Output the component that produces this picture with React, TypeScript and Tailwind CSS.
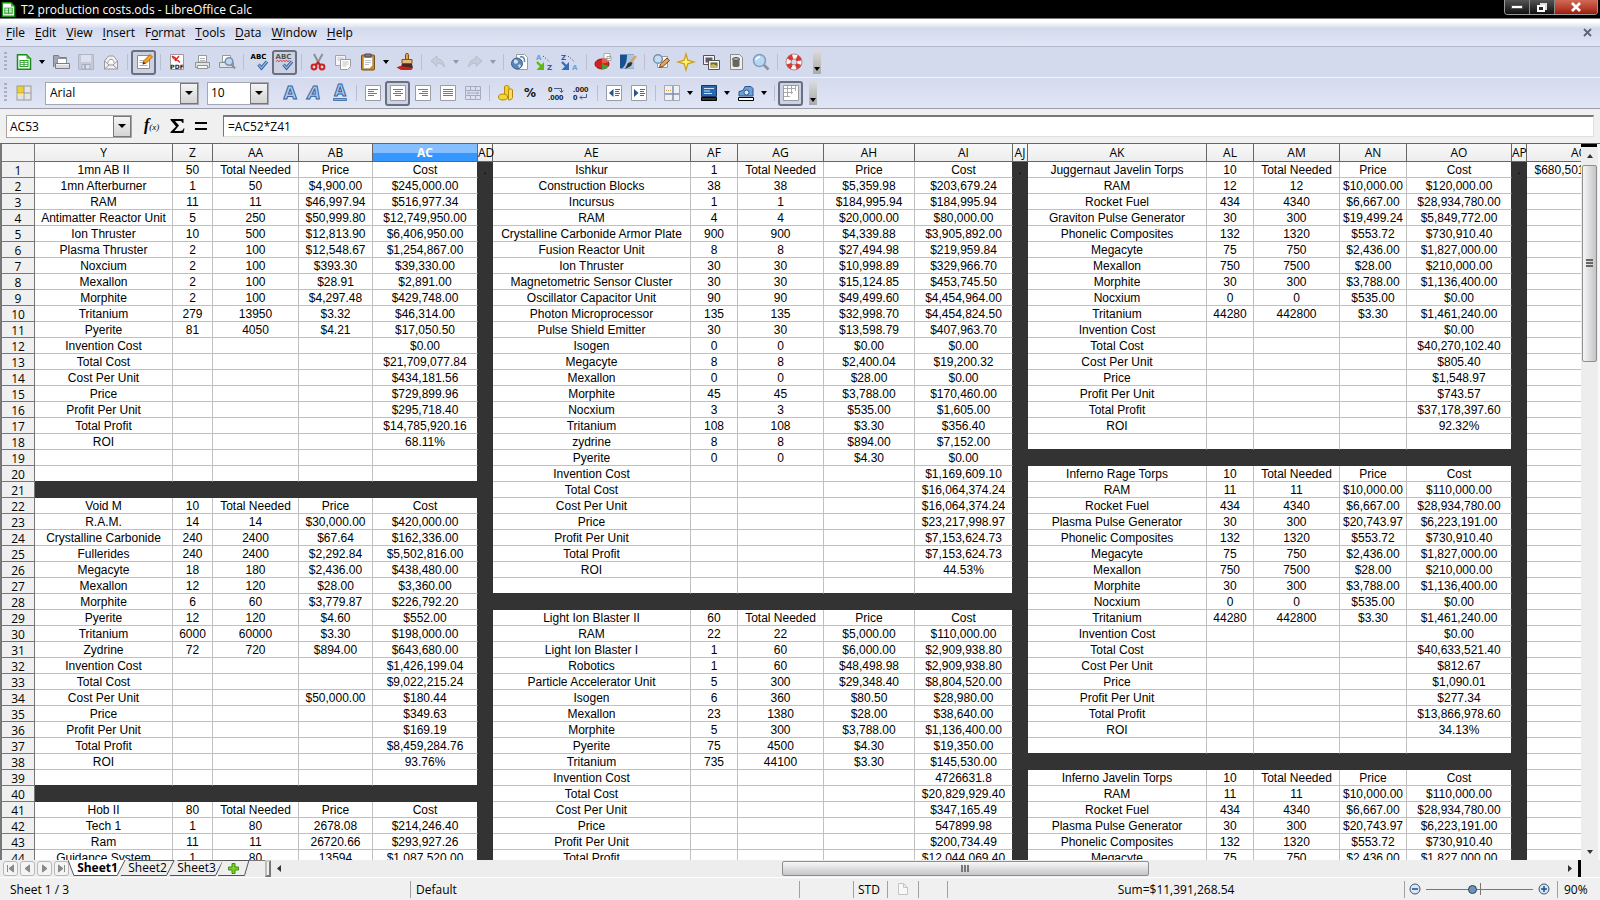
import { useState } from 'react'
import type { ReactNode } from 'react'

type Block = { col: number; row: number; lines: string }

const COLUMNS: [string, number][] = [
  ['Y', 138],
  ['Z', 40],
  ['AA', 86],
  ['AB', 74],
  ['AC', 105],
  ['AD', 15],
  ['AE', 198],
  ['AF', 47],
  ['AG', 86],
  ['AH', 91],
  ['AI', 98],
  ['AJ', 15],
  ['AK', 179],
  ['AL', 47],
  ['AM', 86],
  ['AN', 67],
  ['AO', 105],
  ['AP', 15],
  ['AQ', 106],
]

const ROWS = Array.from({ length: 44 }, (_, i) => i + 1)

// one line per spreadsheet row, cells split by "|"
const BLOCKS: Block[] = [
  {
    col: 0,
    row: 1,
    lines: `1mn AB II|50|Total Needed|Price|Cost
1mn Afterburner|1|50|$4,900.00|$245,000.00
RAM|11|11|$46,997.94|$516,977.34
Antimatter Reactor Unit|5|250|$50,999.80|$12,749,950.00
Ion Thruster|10|500|$12,813.90|$6,406,950.00
Plasma Thruster|2|100|$12,548.67|$1,254,867.00
Noxcium|2|100|$393.30|$39,330.00
Mexallon|2|100|$28.91|$2,891.00
Morphite|2|100|$4,297.48|$429,748.00
Tritanium|279|13950|$3.32|$46,314.00
Pyerite|81|4050|$4.21|$17,050.50
Invention Cost||||$0.00
Total Cost||||$21,709,077.84
Cost Per Unit||||$434,181.56
Price||||$729,899.96
Profit Per Unit||||$295,718.40
Total Profit||||$14,785,920.16
ROI||||68.11%`,
  },
  {
    col: 0,
    row: 22,
    lines: `Void M|10|Total Needed|Price|Cost
R.A.M.|14|14|$30,000.00|$420,000.00
Crystalline Carbonide|240|2400|$67.64|$162,336.00
Fullerides|240|2400|$2,292.84|$5,502,816.00
Megacyte|18|180|$2,436.00|$438,480.00
Mexallon|12|120|$28.00|$3,360.00
Morphite|6|60|$3,779.87|$226,792.20
Pyerite|12|120|$4.60|$552.00
Tritanium|6000|60000|$3.30|$198,000.00
Zydrine|72|720|$894.00|$643,680.00
Invention Cost||||$1,426,199.04
Total Cost||||$9,022,215.24
Cost Per Unit|||$50,000.00|$180.44
Price||||$349.63
Profit Per Unit||||$169.19
Total Profit||||$8,459,284.76
ROI||||93.76%`,
  },
  {
    col: 0,
    row: 41,
    lines: `Hob II|80|Total Needed|Price|Cost
Tech 1|1|80|2678.08|$214,246.40
Ram|11|11|26720.66|$293,927.26
Guidance System|1|80|13594|$1,087,520.00`,
  },
  { col: 5, row: 1, lines: '.' },
  {
    col: 6,
    row: 1,
    lines: `Ishkur|1|Total Needed|Price|Cost
Construction Blocks|38|38|$5,359.98|$203,679.24
Incursus|1|1|$184,995.94|$184,995.94
RAM|4|4|$20,000.00|$80,000.00
Crystalline Carbonide Armor Plate|900|900|$4,339.88|$3,905,892.00
Fusion Reactor Unit|8|8|$27,494.98|$219,959.84
Ion Thruster|30|30|$10,998.89|$329,966.70
Magnetometric Sensor Cluster|30|30|$15,124.85|$453,745.50
Oscillator Capacitor Unit|90|90|$49,499.60|$4,454,964.00
Photon Microprocessor|135|135|$32,998.70|$4,454,824.50
Pulse Shield Emitter|30|30|$13,598.79|$407,963.70
Isogen|0|0|$0.00|$0.00
Megacyte|8|8|$2,400.04|$19,200.32
Mexallon|0|0|$28.00|$0.00
Morphite|45|45|$3,788.00|$170,460.00
Nocxium|3|3|$535.00|$1,605.00
Tritanium|108|108|$3.30|$356.40
zydrine|8|8|$894.00|$7,152.00
Pyerite|0|0|$4.30|$0.00
Invention Cost||||$1,169,609.10
Total Cost||||$16,064,374.24
Cost Per Unit||||$16,064,374.24
Price||||$23,217,998.97
Profit Per Unit||||$7,153,624.73
Total Profit||||$7,153,624.73
ROI||||44.53%`,
  },
  {
    col: 6,
    row: 29,
    lines: `Light Ion Blaster II|60|Total Needed|Price|Cost
RAM|22|22|$5,000.00|$110,000.00
Light Ion Blaster I|1|60|$6,000.00|$2,909,938.80
Robotics|1|60|$48,498.98|$2,909,938.80
Particle Accelerator Unit|5|300|$29,348.40|$8,804,520.00
Isogen|6|360|$80.50|$28,980.00
Mexallon|23|1380|$28.00|$38,640.00
Morphite|5|300|$3,788.00|$1,136,400.00
Pyerite|75|4500|$4.30|$19,350.00
Tritanium|735|44100|$3.30|$145,530.00
Invention Cost||||4726631.8
Total Cost||||$20,829,929.40
Cost Per Unit||||$347,165.49
Price||||547899.98
Profit Per Unit||||$200,734.49
Total Profit||||$12,044,069.40`,
  },
  { col: 11, row: 1, lines: '.' },
  {
    col: 12,
    row: 1,
    lines: `Juggernaut Javelin Torps|10|Total Needed|Price|Cost
RAM|12|12|$10,000.00|$120,000.00
Rocket Fuel|434|4340|$6,667.00|$28,934,780.00
Graviton Pulse Generator|30|300|$19,499.24|$5,849,772.00
Phonelic Composites|132|1320|$553.72|$730,910.40
Megacyte|75|750|$2,436.00|$1,827,000.00
Mexallon|750|7500|$28.00|$210,000.00
Morphite|30|300|$3,788.00|$1,136,400.00
Nocxium|0|0|$535.00|$0.00
Tritanium|44280|442800|$3.30|$1,461,240.00
Invention Cost||||$0.00
Total Cost||||$40,270,102.40
Cost Per Unit||||$805.40
Price||||$1,548.97
Profit Per Unit||||$743.57
Total Profit||||$37,178,397.60
ROI||||92.32%`,
  },
  {
    col: 12,
    row: 20,
    lines: `Inferno Rage Torps|10|Total Needed|Price|Cost
RAM|11|11|$10,000.00|$110,000.00
Rocket Fuel|434|4340|$6,667.00|$28,934,780.00
Plasma Pulse Generator|30|300|$20,743.97|$6,223,191.00
Phonelic Composites|132|1320|$553.72|$730,910.40
Megacyte|75|750|$2,436.00|$1,827,000.00
Mexallon|750|7500|$28.00|$210,000.00
Morphite|30|300|$3,788.00|$1,136,400.00
Nocxium|0|0|$535.00|$0.00
Tritanium|44280|442800|$3.30|$1,461,240.00
Invention Cost||||$0.00
Total Cost||||$40,633,521.40
Cost Per Unit||||$812.67
Price||||$1,090.01
Profit Per Unit||||$277.34
Total Profit||||$13,866,978.60
ROI||||34.13%`,
  },
  {
    col: 12,
    row: 39,
    lines: `Inferno Javelin Torps|10|Total Needed|Price|Cost
RAM|11|11|$10,000.00|$110,000.00
Rocket Fuel|434|4340|$6,667.00|$28,934,780.00
Plasma Pulse Generator|30|300|$20,743.97|$6,223,191.00
Phonelic Composites|132|1320|$553.72|$730,910.40
Megacyte|75|750|$2,436.00|$1,827,000.00`,
  },
  { col: 17, row: 1, lines: '.' },
  { col: 18, row: 1, lines: '$680,501,394.04' },
]

const CELLS: Record<string, string> = {}
BLOCKS.forEach((b) => {
  b.lines.split('\n').forEach((line, r) => {
    line.split('|').forEach((text, c) => {
      CELLS[`${b.row + r}:${b.col + c}`] = text
    })
  })
})

const isDark = (row: number, col: number) => {
  if (col === 5 || col === 11 || col === 17) return true
  if (col < 5) return row === 21 || row === 40
  if (col > 5 && col < 11) return row === 28
  if (col > 11 && col < 17) return row === 19 || row === 38
  return false
}

const cellClass = (row: number, col: number) => {
  if (isDark(row, col)) return 'border-[#333333] bg-[#333333]'
  const bottom = isDark(row + 1, col) ? 'border-b-[#333333]' : 'border-b-[#c0c0c0]'
  const right = isDark(row, col + 1) ? 'border-r-[#333333]' : 'border-r-[#c0c0c0]'
  return `bg-white ${bottom} ${right}`
}

const Svg = ({ children, size = 20 }: { children: ReactNode; size?: number }) => (
  <svg width={size} height={size} viewBox={`0 0 ${size} ${size}`} fill="none" aria-hidden="true">
    {children}
  </svg>
)

const Tool = ({ label, active, children }: { label: string; active?: boolean; children: ReactNode }) => (
  <button
    aria-label={label}
    className={`flex size-[25px] shrink-0 items-center justify-center rounded-[3px] ${
      active ? 'border-2 border-[#6a7082] bg-[#ccd2e2]' : ''
    }`}
  >
    {children}
  </button>
)

const Arrow = ({ label, dim }: { label: string; dim?: boolean }) => (
  <button aria-label={label} className="flex h-6 w-3 shrink-0 items-center justify-center">
    <svg width="6" height="4" viewBox="0 0 6 4" aria-hidden="true">
      <path d="M0 0h6L3 4z" fill={dim ? '#9299ab' : '#000'} />
    </svg>
  </button>
)

const Sep = () => (
  <div className="flex w-2 shrink-0 justify-center">
    <div className="h-4 w-px bg-[#b9bfd0]" />
  </div>
)

const Grip = () => (
  <div className="mr-1 ml-1 h-5 w-[3px] shrink-0 bg-[repeating-linear-gradient(to_bottom,#a9b0c2_0_2px,transparent_2px_4px)]" />
)

const Overflow = ({ label }: { label: string }) => (
  <button
    aria-label={label}
    className="flex h-6 w-2 shrink-0 items-end justify-center bg-linear-to-b from-[#dcdcdc] to-[#a9a9a9] pb-[3px]"
  >
    <svg width="6" height="4" viewBox="0 0 6 4" aria-hidden="true">
      <path d="M0 0h6L3 4z" fill="#000" />
    </svg>
  </button>
)

const DropMark = () => (
  <span className="pointer-events-none absolute inset-y-px right-px flex w-[18px] items-center justify-center border border-[#777] bg-linear-to-b from-[#f4f4f4] to-[#d4d4d4]">
    <svg width="8" height="4" viewBox="0 0 8 4" aria-hidden="true">
      <path d="M0 0h8L4 4z" fill="#000" />
    </svg>
  </span>
)

const CalcIcon = ({ size }: { size: number }) => (
  <svg width={size} height={size} viewBox="0 0 16 16" fill="none" aria-hidden="true">
    <path d="M1.5.8h9l4 4v10.4h-13z" fill="#fff" stroke="#178a1c" strokeWidth="1.5" />
    <path d="M10.5.8l4 4h-4z" fill="#43b02a" />
    <path d="M3.5 6h9v7h-9z" fill="#2f9e2f" />
    <path d="M4.5 7h3v1.2h-3zM8.5 7h3v1.2h-3zM4.5 9.1h3v1.2h-3zM8.5 9.1h3v1.2h-3zM4.5 11.1h3v1h-3zM8.5 11.1h3v1h-3z" fill="#fff" />
  </svg>
)

const OpenIcon = () => (
  <Svg>
    <path d="M2.5 15V3.5h5l1 2h7V9" fill="#a3a6ad" stroke="#7d8087" />
    <path d="M6.5 6.5h9v6h-9z" fill="#fff" stroke="#8b8f96" />
    <path d="M4.5 11.5h14v5h-14z" fill="#d8dade" stroke="#787c84" />
    <path d="M5 12.5h13" stroke="#f4f4f6" />
  </Svg>
)

const SaveIcon = () => (
  <Svg>
    <path d="M2.5 2.5h15v15h-15z" fill="#c5cad8" stroke="#b0b6c6" />
    <path d="M5 3h10v7H5z" fill="#dde1ec" />
    <path d="M6 12.5h8V17H6z" fill="#dfe2ea" stroke="#a8adbb" />
    <path d="M8 13h2v4H8z" fill="#a8adbb" />
  </Svg>
)

const MailIcon = () => (
  <Svg>
    <path d="M3.5 9l4-5h5l4 5v8h-13z" fill="#f2f2f2" stroke="#96999f" />
    <path d="M3.5 9l4.500 4h4l4.500-4M3.500 17L8 13M16.500 17L12 13" stroke="#96999f" />
    <path d="M7 11c0-5 6-5 6 0" fill="#fff" stroke="#96999f" />
  </Svg>
)

const EditIcon = () => (
  <Svg>
    <path d="M3.5 3.5h12v13h-12z" fill="#fff" stroke="#8c8c8c" />
    <path d="M5.500 8.500h5M5.500 10.500h4M5.500 13.500h8" stroke="#b0b0b0" />
    <path d="M9 12l1-3.500 6-6L18.500 5l-6 6z" fill="#f7a01c" stroke="#a35a0a" strokeWidth=".8" />
    <path d="M8.500 12.500l1-3 2 2z" fill="#333" />
  </Svg>
)

const PdfIcon = () => (
  <Svg>
    <path d="M3.5 2.5h13v15h-13z" fill="#fff" stroke="#9a9a9a" />
    <path d="M5 4l3 1.500 5 5M5 4l1.500 2.500 6 3M12 4L8 9" stroke="#e02424" strokeWidth="1.300" />
    <text x="10" y="17" textAnchor="middle" fontSize="6" fontWeight="700" fontFamily="DejaVu Sans, sans-serif" fill="#222">
      PDF
    </text>
  </Svg>
)

const PrintIcon = () => (
  <Svg>
    <path d="M6.5 3.5h8V10h-8z" fill="#fff" stroke="#9a9a9a" />
    <path d="M8 6.500h5M8 8.500h5" stroke="#b5b5b5" />
    <path d="M3.5 10.500h14v5h-14z" fill="#e2e3e5" stroke="#909398" />
    <path d="M5.500 13.500h10v3h-10z" fill="#f7f7f7" stroke="#909398" />
  </Svg>
)

const PreviewIcon = () => (
  <Svg>
    <path d="M5.5 3.500h8V10h-8z" fill="#fff" stroke="#9a9a9a" />
    <path d="M2.500 10.500h14v5h-14z" fill="#e2e3e5" stroke="#909398" />
    <circle cx="12" cy="9.500" r="3.800" fill="#bcd7f0" stroke="#7790ab" strokeWidth="1.500" />
    <path d="M14.500 12.500l3.500 4" stroke="#8893a0" strokeWidth="2.200" />
  </Svg>
)

const SpellIcon = ({ auto }: { auto?: boolean }) => (
  <Svg>
    <text x="8.500" y="7" textAnchor="middle" fontSize="7" fontWeight="700" fontFamily="DejaVu Sans, sans-serif" fill={auto ? '#555' : '#000'}>
      ABC
    </text>
    {auto && <path d="M1 9.500l1.500-1 1.500 1 1.500-1 1.500 1 1.500-1 1.500 1 1.500-1 1.500 1 1.500-1" stroke="#e03030" />}
    <path d="M8.500 12.500l3 3.500L17 9.500" stroke="#2f5c9b" strokeWidth="3.200" />
    <path d="M8.500 12.500l3 3.500L17 9.500" stroke="#8ab4e4" strokeWidth="1.400" />
  </Svg>
)

const CutIcon = () => (
  <Svg>
    <path d="M6 2l5.500 11M14.500 2L8.500 13" stroke="#8b8f96" strokeWidth="2" />
    <circle cx="6" cy="15" r="2.400" stroke="#d01f1f" strokeWidth="2" />
    <circle cx="14" cy="15" r="2.400" stroke="#d01f1f" strokeWidth="2" />
    <path d="M7.500 13L10 10.500l2.500 2.500" stroke="#d01f1f" strokeWidth="2" />
  </Svg>
)

const CopyIcon = () => (
  <Svg>
    <path d="M2.500 3.500h10v10h-10z" fill="#f5f5f5" stroke="#a5a5a5" />
    <path d="M4.500 6h6M4.500 8h6" stroke="#c5c5c5" />
    <path d="M7.500 7.500h10v7l-3 3h-7z" fill="#fff" stroke="#9a9a9a" />
    <path d="M9.500 10h6M9.500 12h6M9.500 14h4" stroke="#bdbdbd" />
  </Svg>
)

const PasteIcon = () => (
  <Svg>
    <rect x="3.500" y="3" width="13" height="15" rx="1" fill="#c98a2b" stroke="#7d4f0c" />
    <path d="M5.500 5.500h9v8l-3 3h-6z" fill="#fff" stroke="#9a9a9a" strokeWidth=".6" />
    <path d="M7 2h6v3H7z" fill="#7c7f85" stroke="#4b4d51" />
    <path d="M7 8.500h6M7 10.500h6M7 12.500h4" stroke="#c0c0c0" />
  </Svg>
)

const BrushIcon = () => (
  <Svg>
    <path d="M10.500 2.500c0-1.500 3-1.500 3 0v5h-3z" fill="#e0a04a" stroke="#80511a" />
    <path d="M7 7.500h10v4H7z" fill="#e3bb7c" stroke="#80511a" />
    <path d="M7 12h10l1 4.500H5z" fill="#4a2a20" />
    <path d="M1.500 15.500L5 14l11 1.500 1 2.500H6z" fill="#c92020" />
  </Svg>
)

const UndoIcon = ({ flip }: { flip?: boolean }) => (
  <Svg>
    <path
      d={flip ? 'M17 9l-6-5v3C7 7 4 9.500 3.500 15c2-3 4.500-4 7.500-4v3.500z' : 'M3 9l6-5v3c4 0 7 2.500 7.500 8-2-3-4.500-4-7.500-4v3.500z'}
      fill="#c6ccda"
      stroke="#b6bdcd"
    />
  </Svg>
)

const LinkIcon = () => (
  <Svg>
    <path d="M6.500 2.500h8l3 3v12h-11z" fill="#fff" stroke="#9a9a9a" />
    <circle cx="7" cy="11.500" r="5.500" fill="#5c86b8" stroke="#3b608e" />
    <path d="M4 8c2-1 4 0 4 2s-3 2-4 1zM8 13c2-1 3 0 3 1l-2 2z" fill="#cfe0f2" />
    <path d="M10 5c3-1 5 1 4.500 5" stroke="#5c86b8" strokeWidth="1.500" />
  </Svg>
)

const SortIcon = ({ desc }: { desc?: boolean }) => (
  <Svg>
    <text x="1" y="8" fontSize="7" fontWeight="700" fontFamily="DejaVu Sans, sans-serif" fill={desc ? '#2b5ca5' : '#6f9fd8'}>
      {desc ? 'Z' : 'A'}
    </text>
    <text x="12" y="18" fontSize="7" fontWeight="700" fontFamily="DejaVu Sans, sans-serif" fill={desc ? '#6f9fd8' : '#2b5ca5'}>
      {desc ? 'A' : 'Z'}
    </text>
    <path d="M8 4l7 6" stroke="#333" strokeDasharray="1 2" />
    <path d="M2 10l5 5" stroke={desc ? '#2f6fb5' : '#5cb814'} strokeWidth="2.200" />
    <path d="M9 10v8H1.500z" fill={desc ? '#2f6fb5' : '#5cb814'} />
  </Svg>
)

const ChartIcon = () => (
  <Svg>
    <ellipse cx="9" cy="12" rx="7" ry="5" fill="#d42020" stroke="#8e1010" />
    <path d="M9 12l6.500 2C14 17 11 17 9 17z" fill="#3aa52a" />
    <path d="M9 11.500V6c4 0 6 2 7 4z" fill="#f05a4a" />
    <path d="M11 1.500h6v5h-6zM14 4.500h4v4h-4z" fill="#fff" stroke="#999" strokeWidth=".8" />
  </Svg>
)

const DrawIcon = () => (
  <Svg>
    <path d="M2 2.500h14v14H2z" fill="#19508f" />
    <path d="M9 2.500h7v14H4c4-3 5-8 5-14z" fill="#a9c6e4" />
    <path d="M18 4l-6 7" stroke="#d9a25e" strokeWidth="2.500" />
    <path d="M13 10l-3 1-3 6 6-3 1.500-3z" fill="#333" />
  </Svg>
)

const FindIcon = () => (
  <Svg>
    <path d="M6.500 4.500h10v11h-10z" fill="#fff" stroke="#9a9a9a" />
    <circle cx="7" cy="7" r="4.300" fill="#c5def4" stroke="#7790ab" strokeWidth="1.500" />
    <path d="M8.500 15.500l1-3.500 6.500-6 2.500 2.500-6.500 6z" fill="#e8a35c" stroke="#6d4516" />
  </Svg>
)

const NavigatorIcon = () => (
  <Svg>
    <path d="M10 2l1.800 6.200L18 10l-6.200 1.800L10 18l-1.800-6.200L2 10l6.200-1.800z" fill="#fff27a" stroke="#d19a12" strokeWidth="1.200" />
  </Svg>
)

const GalleryIcon = () => (
  <Svg>
    <path d="M2.500 3.500h11v9h-11z" fill="#f6f6f6" stroke="#555" />
    <path d="M4.500 5.500h7v5h-7z" fill="#665577" />
    <path d="M7.500 8.500h11v9h-11z" fill="#f6f6f6" stroke="#555" />
    <path d="M9.500 10.500h7v5h-7z" fill="#5d6b2d" />
    <path d="M9.500 13l3-1 4 2v1.500h-7z" fill="#d8b15a" />
  </Svg>
)

const SourceIcon = () => (
  <Svg>
    <path d="M4.500 2.500h9l3 3v12h-12z" fill="#eee" stroke="#8d8d8d" />
    <path d="M6.500 7v6.500c0 2 7 2 7 0V7z" fill="#666" />
    <ellipse cx="10" cy="7" rx="3.500" ry="1.500" fill="#aaa" stroke="#555" />
  </Svg>
)

const ZoomIcon = () => (
  <Svg>
    <path d="M13 13l4.500 4.500" stroke="#8c8f95" strokeWidth="2.600" />
    <circle cx="8.500" cy="8.500" r="6" fill="#b9d7f3" stroke="#7f9fc0" strokeWidth="1.600" />
    <path d="M5 8c.5-2 2-3 4-3" stroke="#fff" strokeWidth="1.500" />
  </Svg>
)

const HelpIcon = () => (
  <Svg>
    <circle cx="10" cy="10" r="5.500" stroke="#f5f5f5" strokeWidth="5" />
    <circle cx="10" cy="10" r="5.500" stroke="#d83a32" strokeWidth="5" strokeDasharray="4.320 4.320" strokeDashoffset="-2.160" />
    <circle cx="10" cy="10" r="8" stroke="#a85a56" strokeWidth=".7" />
    <circle cx="10" cy="10" r="3" stroke="#a85a56" strokeWidth=".7" />
  </Svg>
)

const StylesIcon = () => (
  <Svg>
    <path d="M2.500 2.500h15v15h-15z" fill="#9b9b9b" />
    <path d="M3.500 3.500h6v6h-6z" fill="#f0d322" />
    <path d="M10.500 3.500h6v6h-6zM3.500 10.500h6v6h-6zM10.500 10.500h6v6h-6z" fill="#e4e4e4" />
    <path d="M3.500 10.500h6v2h-6z" fill="#f7e98a" />
  </Svg>
)

const LetterIcon = ({ kind }: { kind: 'bold' | 'italic' | 'underline' }) => (
  <Svg>
    <text
      x={kind === 'italic' ? 9 : 10}
      y={kind === 'underline' ? 13 : 16}
      textAnchor="middle"
      fontSize={kind === 'underline' ? 15 : 17}
      fontWeight="700"
      fontStyle={kind === 'italic' ? 'italic' : 'normal'}
      fontFamily="DejaVu Sans, sans-serif"
      fill="#a9cbf2"
      stroke="#34619f"
      strokeWidth="1"
    >
      A
    </text>
    {kind === 'underline' && <path d="M3.500 15.500h13v2h-13z" fill="#7fb0ea" stroke="#34619f" strokeWidth=".8" />}
  </Svg>
)

const ALIGN_LINES: Record<string, string> = {
  left: 'M5 6.500h10M5 8.500h6M5 10.500h9M5 12.500h6',
  center: 'M5 6.500h10M7 8.500h6M5 10.500h10M7 12.500h6',
  right: 'M5 6.500h10M9 8.500h6M6 10.500h9M9 12.500h6',
  justify: 'M5 6.500h10M5 8.500h10M5 10.500h10M5 12.500h10',
}

const AlignIcon = ({ kind }: { kind: string }) => (
  <Svg>
    <path d="M2.500 2.500h15v15h-15z" fill="#fff" stroke="#9a9da3" />
    <path d={ALIGN_LINES[kind]} stroke="#777" />
  </Svg>
)

const MergeIcon = () => (
  <Svg>
    <path d="M2.500 3.500h15v13h-15zM2.500 7.500h15M2.500 12.500h15M7.500 3.500v4M12.500 3.500v4M7.500 12.500v4M12.500 12.500v4" stroke="#a6acbb" />
    <path d="M4 10h12M6 8.500L4.500 10 6 11.500M14 8.500l1.500 1.500-1.500 1.500" stroke="#a6acbb" />
  </Svg>
)

const CurrencyIcon = () => (
  <Svg>
    <path d="M8.500 4c0-2 4.500-2 4.500 0v11H8.500z" fill="#f2cf2f" stroke="#b58a0a" />
    <path d="M12.500 7c0-1.500 4-1.500 4 0v7.500c0 2-3 2.500-4 2.500z" fill="#f7de60" stroke="#b58a0a" />
    <ellipse cx="7" cy="14" rx="4.500" ry="3" fill="#f5d638" stroke="#b58a0a" />
  </Svg>
)

const PercentIcon = () => (
  <Svg>
    <text x="9" y="14" textAnchor="middle" fontSize="12" fontWeight="700" fontFamily="DejaVu Sans, sans-serif" fill="#111">
      %
    </text>
  </Svg>
)

const DecimalIcon = ({ remove }: { remove?: boolean }) => (
  <Svg>
    <text x="2" y="9" fontSize="8" fontWeight="700" fontFamily="Liberation Sans, sans-serif" fill="#111">
      {remove ? '.000' : '0'}
    </text>
    <text x="2" y="17" fontSize="8" fontWeight="700" fontFamily="Liberation Sans, sans-serif" fill="#111">
      {remove ? '0' : '.000'}
    </text>
    <path d={remove ? 'M15.500 11v3.500H9M11 12.500l-2 2 2 2' : 'M8 5.500h7.500V9M13.500 7.500l2 2 2-2'} stroke="#3e5f8f" />
  </Svg>
)

const IndentIcon = ({ more }: { more?: boolean }) => (
  <Svg>
    <path d="M2.500 2.500h15v15h-15z" fill="#fff" stroke="#9a9da3" />
    <path d={more ? 'M5 6l4.500 4L5 14z' : 'M9.500 6L5 10l4.500 4z'} fill="#2a5488" />
    <path d="M11 6.500h5M11 8.500h4M11 10.500h5M11 12.500h4" stroke="#666" />
  </Svg>
)

const BorderIcon = () => (
  <Svg>
    <path d="M2.500 2.500h15v15h-15z" fill="#eef0f4" stroke="#a6a9b1" />
    <path d="M11 3v14M3 11h14" stroke="#7f90ad" strokeWidth="1.500" />
    <path d="M4 7.500h5" stroke="#c9a64c" strokeDasharray="1 1" />
  </Svg>
)

const BackgroundIcon = () => (
  <Svg>
    <path d="M2.500 2.500h15v11h-15z" fill="#2a68ad" stroke="#123a6b" />
    <path d="M5 5.500h10M5 8h6M5 10.500h8" stroke="#cfe2f7" />
    <path d="M2.500 14.500h15v3h-15z" fill="#333" stroke="#000" />
  </Svg>
)

const LineColorIcon = () => (
  <Svg>
    <path d="M3 13V8.500l4-1L9 3.500h6l2 2V13z" fill="#6a9fd9" stroke="#28568f" />
    <circle cx="10.500" cy="9.500" r="2.500" fill="#d7e7f7" stroke="#28568f" />
    <path d="M2.500 14.500h15v3h-15z" fill="#fff" stroke="#000" />
  </Svg>
)

const GridIcon = () => (
  <Svg>
    <path d="M2.500 2.500h15v15h-15z" fill="#fff" stroke="#9a9da3" />
    <path d="M3 5.500h12M3 9.500h9M3 13.500h6M6.500 3v11M10.500 3v8M14.500 3v5" stroke="#aaa" />
  </Svg>
)

const MENUS = [
  ['', 'F', 'ile'],
  ['', 'E', 'dit'],
  ['', 'V', 'iew'],
  ['', 'I', 'nsert'],
  ['F', 'o', 'rmat'],
  ['', 'T', 'ools'],
  ['', 'D', 'ata'],
  ['', 'W', 'indow'],
  ['', 'H', 'elp'],
]

const TitleBar = () => (
  <header className="flex h-[19px] shrink-0 items-center border-b border-[#777] bg-black pr-[2px] pl-px text-white">
    <CalcIcon size={15} />
    <h1 className="ml-[5px] flex-1 pt-px text-xs leading-[18px]">T2 production costs.ods - LibreOffice Calc</h1>
    <div className="mb-[3px] flex h-[15px] self-start overflow-hidden rounded-b-[4px] border border-t-0 border-[#9a9a9a]">
      <button aria-label="Minimize" className="flex w-[25px] items-center justify-center border-r border-[#888] bg-linear-to-b from-[#555] to-[#111]">
        <span className="h-1 w-3 border border-[#555] bg-white" />
      </button>
      <button aria-label="Restore" className="flex w-[25px] items-center justify-center border-r border-[#888] bg-linear-to-b from-[#555] to-[#111]">
        <svg width="12" height="11" viewBox="0 0 12 11" aria-hidden="true">
          <path d="M4 1h7v7H9V3H4z" fill="#ddd" />
          <path d="M2 4h6v5H2z" fill="none" stroke="#fff" strokeWidth="2" />
        </svg>
      </button>
      <button aria-label="Close" className="flex w-[42px] items-center justify-center bg-linear-to-b from-[#d06a55] to-[#a01808]">
        <svg width="12" height="10" viewBox="0 0 12 10" aria-hidden="true">
          <path d="M2 1l8 8M10 1L2 9" stroke="#fff" strokeWidth="2.600" />
        </svg>
      </button>
    </div>
  </header>
)

const MenuBar = () => (
  <nav className="flex h-7 shrink-0 items-center border-b border-[#b3b9cc] bg-linear-to-b from-white from-10% via-[#d4daed] via-35% to-[#e1e6f5] pr-2 pl-px">
    {MENUS.map(([before, key, after]) => (
      <button key={key + after} className="px-[5px] pt-px text-xs">
        {before}
        <span className="underline underline-offset-2">{key}</span>
        {after}
      </button>
    ))}
    <button aria-label="Close document" className="ml-auto">
      <svg width="9" height="9" viewBox="0 0 9 9" aria-hidden="true">
        <path d="M1 1l7 7M8 1L1 8" stroke="#5d6475" strokeWidth="1.800" />
      </svg>
    </button>
  </nav>
)

const StandardBar = () => (
  <div className="flex h-[31px] shrink-0 items-center border-b border-[#f0f3fb] bg-[#d4daed]">
    <Grip />
    <Tool label="New"><CalcIcon size={16} /></Tool>
    <Arrow label="New options" />
    <Tool label="Open"><OpenIcon /></Tool>
    <Tool label="Save"><SaveIcon /></Tool>
    <Tool label="E-mail"><MailIcon /></Tool>
    <Sep />
    <Tool label="Edit file" active><EditIcon /></Tool>
    <Sep />
    <Tool label="Export as PDF"><PdfIcon /></Tool>
    <Tool label="Print"><PrintIcon /></Tool>
    <Tool label="Page preview"><PreviewIcon /></Tool>
    <Sep />
    <Tool label="Spelling"><SpellIcon /></Tool>
    <Tool label="AutoSpellcheck" active><SpellIcon auto /></Tool>
    <Sep />
    <Tool label="Cut"><CutIcon /></Tool>
    <Tool label="Copy"><CopyIcon /></Tool>
    <Tool label="Paste"><PasteIcon /></Tool>
    <Arrow label="Paste options" />
    <Tool label="Format paintbrush"><BrushIcon /></Tool>
    <Sep />
    <Tool label="Undo"><UndoIcon /></Tool>
    <Arrow label="Undo history" dim />
    <Tool label="Redo"><UndoIcon flip /></Tool>
    <Arrow label="Redo history" dim />
    <Sep />
    <Tool label="Hyperlink"><LinkIcon /></Tool>
    <Tool label="Sort ascending"><SortIcon /></Tool>
    <Tool label="Sort descending"><SortIcon desc /></Tool>
    <Sep />
    <Tool label="Chart"><ChartIcon /></Tool>
    <Tool label="Show draw functions"><DrawIcon /></Tool>
    <Sep />
    <Tool label="Find and replace"><FindIcon /></Tool>
    <Tool label="Navigator"><NavigatorIcon /></Tool>
    <Tool label="Gallery"><GalleryIcon /></Tool>
    <Tool label="Data sources"><SourceIcon /></Tool>
    <Tool label="Zoom"><ZoomIcon /></Tool>
    <Sep />
    <Tool label="Help"><HelpIcon /></Tool>
    <div className="w-[7px]" />
    <Overflow label="More standard tools" />
  </div>
)

const FormattingBar = () => (
  <div className="flex h-[31px] shrink-0 items-center border-b border-[#9a9da8] bg-linear-to-b from-[#d4daed] to-[#e1e6f6]">
    <Grip />
    <Tool label="Styles and formatting"><StylesIcon /></Tool>
    <div className="relative ml-[9px] h-[23px] w-[154px]">
      <select aria-label="Font name" className="h-full w-full appearance-none border border-[#a5a8b0] bg-white px-1 text-xs" defaultValue="Arial">
        <option>Arial</option>
      </select>
      <DropMark />
    </div>
    <div className="relative mx-2 h-[23px] w-[62px]">
      <select aria-label="Font size" className="h-full w-full appearance-none border border-[#a5a8b0] bg-white px-[3px] text-xs" defaultValue="10">
        <option>10</option>
      </select>
      <DropMark />
    </div>
    <Tool label="Bold"><LetterIcon kind="bold" /></Tool>
    <Tool label="Italic"><LetterIcon kind="italic" /></Tool>
    <Tool label="Underline"><LetterIcon kind="underline" /></Tool>
    <Sep />
    <Tool label="Align left"><AlignIcon kind="left" /></Tool>
    <Tool label="Align center" active><AlignIcon kind="center" /></Tool>
    <Tool label="Align right"><AlignIcon kind="right" /></Tool>
    <Tool label="Justified"><AlignIcon kind="justify" /></Tool>
    <Tool label="Merge cells"><MergeIcon /></Tool>
    <Sep />
    <Tool label="Currency"><CurrencyIcon /></Tool>
    <Tool label="Percent"><PercentIcon /></Tool>
    <Tool label="Add decimal place"><DecimalIcon /></Tool>
    <Tool label="Delete decimal place"><DecimalIcon remove /></Tool>
    <Sep />
    <Tool label="Decrease indent"><IndentIcon /></Tool>
    <Tool label="Increase indent"><IndentIcon more /></Tool>
    <Sep />
    <Tool label="Borders"><BorderIcon /></Tool>
    <Arrow label="Border options" />
    <Tool label="Background color"><BackgroundIcon /></Tool>
    <Arrow label="Background options" />
    <Tool label="Line color"><LineColorIcon /></Tool>
    <Arrow label="Line color options" />
    <Sep />
    <Tool label="Show grid lines" active><GridIcon /></Tool>
    <div className="w-[6px]" />
    <Overflow label="More formatting tools" />
  </div>
)

const FormulaBar = () => {
  const [formula, setFormula] = useState('=AC52*Z41')
  return (
    <div className="flex h-[34px] shrink-0 items-center bg-[#f0f0f0] pr-[6px] pl-[6px]">
      <div className="relative h-[23px] w-[126px] shrink-0">
        <input aria-label="Name box" defaultValue="AC53" className="h-full w-full border border-[#a5a5a5] bg-white px-[3px] text-xs" />
        <DropMark />
      </div>
      <button aria-label="Function wizard" className="ml-3 w-5 text-left font-['Liberation_Serif',serif] text-base leading-5 font-bold whitespace-nowrap italic">
        f<span className="text-[9px] font-normal">(x)</span>
      </button>
      <button aria-label="Sum" className="ml-[3px] flex size-5 items-center justify-center">
        <svg width="15" height="16" viewBox="0 0 15 16" aria-hidden="true">
          <path d="M.5 1h13v4h-1c-.5-1.500-1.500-2-3-2H5l4 4.500L4.500 13H10c2 0 3-.8 3.500-2.500h1L13.500 15H.5v-1L6 8.500.5 2z" fill="#000" />
        </svg>
      </button>
      <button aria-label="Function" className="ml-1 flex size-5 flex-col items-center justify-center gap-1">
        <span className="h-[2px] w-3 bg-black" />
        <span className="h-[2px] w-3 bg-black" />
      </button>
      <input
        aria-label="Formula"
        value={formula}
        onChange={(e) => setFormula(e.target.value)}
        className="ml-3 h-[22px] flex-1 border border-t-2 border-[#e0e0e0] border-t-[#777] border-l-[#777] bg-white px-1 text-xs"
      />
    </div>
  )
}

const Grid = () => (
  <div className="min-w-0 flex-1 overflow-hidden">
    <table className="w-[1633px] table-fixed border-separate border-spacing-0 text-center font-['Liberation_Sans',Arial,sans-serif] text-xs whitespace-nowrap">
      <colgroup>
        <col className="w-[35px]" />
        {COLUMNS.map(([name, width]) => (
          <col key={name} style={{ width }} />
        ))}
      </colgroup>
      <thead className="font-['Open_Sans','Noto_Sans',sans-serif]">
        <tr>
          <th aria-label="Select all" className="h-[18px] border-r border-b border-l-2 border-[#777] bg-[#f2f2f2] p-0" />
          {COLUMNS.map(([name]) => (
            <th
              key={name}
              scope="col"
              className={`h-[18px] border-r border-b border-[#666] p-0 leading-[17px] ${
                name === 'AC'
                  ? 'bg-linear-to-b from-[#86bfff] from-50% to-[#3497ff] to-50% font-bold text-white'
                  : 'bg-linear-to-b from-[#f8f8f8] to-[#ededed] font-normal'
              }`}
            >
              {name}
            </th>
          ))}
        </tr>
      </thead>
      <tbody>
        {ROWS.map((row) => (
          <tr key={row}>
            <th
              scope="row"
              className="h-4 border-r border-b border-l-2 border-[#777] bg-[#f0f0f0] p-0 pt-[2px] font-['Open_Sans','Noto_Sans',sans-serif] leading-[13px] font-normal"
            >
              {row}
            </th>
            {COLUMNS.map(([name], col) => (
              <td key={name} className={`h-4 border-r border-b p-0 pt-[2px] leading-[13px] ${cellClass(row, col)}`}>
                {CELLS[`${row}:${col}`]}
              </td>
            ))}
          </tr>
        ))}
      </tbody>
    </table>
  </div>
)

const VerticalScroll = () => (
  <div className="flex w-[19px] shrink-0 flex-col border-r-2 border-[#f8f8f8] bg-[#ededed]">
    <div className="h-[3px] w-4 bg-black" />
    <button aria-label="Scroll up" className="flex h-[18px] items-center justify-center">
      <svg width="6" height="4" viewBox="0 0 6 4" aria-hidden="true"><path d="M0 4h6L3 0z" fill="#333" /></svg>
    </button>
    <div className="min-h-0 flex-1">
      <div className="mx-px flex h-[29%] flex-col items-center justify-center gap-px rounded-[2px] border border-[#8e8e8e] bg-linear-to-r from-[#f7f7f7] to-[#c4c4c8]">
        <span className="h-[2px] w-[7px] bg-[#666]" />
        <span className="h-[2px] w-[7px] bg-[#666]" />
        <span className="h-[2px] w-[7px] bg-[#666]" />
      </div>
    </div>
    <button aria-label="Scroll down" className="flex h-4 items-center justify-center">
      <svg width="6" height="4" viewBox="0 0 6 4" aria-hidden="true"><path d="M0 0h6L3 4z" fill="#333" /></svg>
    </button>
  </div>
)

const NAV = [
  { label: 'First sheet', d: 'M4.500 4v7M10.500 4v7L6 7.500z' },
  { label: 'Previous sheet', d: 'M9.500 4v7L5 7.500z' },
  { label: 'Next sheet', d: 'M5.500 4v7L10 7.500z' },
  { label: 'Last sheet', d: 'M10.500 4v7M4.500 4v7L9 7.500z' },
]

const SheetTab = ({ active, width, children }: { active?: boolean; width: string; children: ReactNode }) => (
  <button className={`relative flex h-4 ${width} items-center justify-center text-xs leading-4 ${active ? 'font-bold' : ''}`}>
    <svg className="absolute inset-y-0 -left-1 h-4 w-[calc(100%+8px)]" viewBox="0 0 60 16" preserveAspectRatio="none" aria-hidden="true">
      <path d={active ? 'M0 0l6 15.500h44L58 0' : 'M2 15.500h48L58 .5H10'} fill={active ? '#fff' : '#efefef'} stroke="#555" vectorEffect="non-scaling-stroke" />
    </svg>
    <span className="relative">{children}</span>
  </button>
)

const SheetBar = () => (
  <div className="flex h-[17px] shrink-0 items-start bg-[#ededed]">
    <div className="flex w-[72px] shrink-0 gap-[2px] pt-px pl-[3px]">
      {NAV.map(({ label, d }) => (
        <button key={label} aria-label={label} className="size-[15px] rounded-[3px] border border-[#b9b9b9] bg-[#f4f4f4]">
          <svg width="13" height="13" viewBox="1 1 13 13" aria-hidden="true">
            <path d={d} fill="#8a8a8a" stroke="#8a8a8a" />
          </svg>
        </button>
      ))}
    </div>
    <SheetTab active width="w-[51px]">Sheet1</SheetTab>
    <SheetTab width="w-[49px]">Sheet2</SheetTab>
    <SheetTab width="w-[49px]">Sheet3</SheetTab>
    <SheetTab width="w-[25px]">
      <svg width="11" height="11" viewBox="0 0 11 11" aria-label="Add sheet">
        <path d="M4 .5h3V4h3.500v3H7v3.500H4V7H.5V4H4z" fill="#7bd11f" stroke="#3f8f10" />
      </svg>
    </SheetTab>
    <div className="h-4 w-[19px] border-t border-[#777]" />
    <div className="h-[17px] w-[6px] border-2 border-[#777] border-t-[#ccc] border-l-[#bbb] bg-[#f0f0f0]" />
    <button aria-label="Scroll left" className="flex h-[17px] w-4 items-center justify-center">
      <svg width="4" height="7" viewBox="0 0 4 7" aria-hidden="true"><path d="M4 0v7L0 3.500z" fill="#333" /></svg>
    </button>
    <div className="flex min-w-0 flex-1 pt-px">
      <div className="w-[38.8%]" />
      <div className="flex h-[15px] w-[28.8%] items-center justify-center gap-px rounded-[2px] border border-[#8e8e8e] bg-linear-to-b from-[#f7f7f7] to-[#c6c6ca]">
        <span className="h-[7px] w-[2px] bg-[#777]" />
        <span className="h-[7px] w-[2px] bg-[#777]" />
        <span className="h-[7px] w-[2px] bg-[#777]" />
      </div>
    </div>
    <button aria-label="Scroll right" className="flex h-[17px] w-4 items-center justify-center">
      <svg width="4" height="7" viewBox="0 0 4 7" aria-hidden="true"><path d="M0 0v7l4-3.500z" fill="#333" /></svg>
    </button>
    <div className="mr-[19px] h-[17px] w-[3px] bg-black" />
  </div>
)

const ZoomButton = ({ label, plus }: { label: string; plus?: boolean }) => (
  <button aria-label={label}>
    <svg width="12" height="12" viewBox="0 0 12 12" aria-hidden="true">
      <circle cx="6" cy="6" r="5" fill="#d9e8f7" stroke="#3d5470" />
      <path d={plus ? 'M3 6h6M6 3v6' : 'M3 6h6'} stroke="#1c4f8c" strokeWidth="1.500" />
    </svg>
  </button>
)

const StatusBar = () => {
  const [zoom, setZoom] = useState(43)
  return (
    <footer className="flex h-[23px] shrink-0 items-center border-t border-white bg-[#f0f0f0] text-xs [&>*]:h-[17px] [&>*]:leading-[18px]">
      <div className="min-w-0 flex-[400] pl-[10px]">Sheet 1 / 3</div>
      <div className="min-w-0 flex-[383] border-l border-[#a0a0a0] pl-[5px]">Default</div>
      <div className="w-[54px] border-l border-[#a0a0a0]" />
      <div className="w-[34px] border-l border-[#a0a0a0] pl-1">STD</div>
      <div className="flex w-[31px] items-center justify-center border-l border-[#a0a0a0]">
        <svg width="10" height="12" viewBox="0 0 10 12" fill="none" aria-hidden="true">
          <path d="M.5.5h5l4 4v7h-9zM5.500.5v4h4" stroke="#c4c4c4" fill="#f8f8f8" />
        </svg>
      </div>
      <div className="w-[29px] border-l border-[#a0a0a0]" />
      <div className="min-w-0 flex-[456] border-l border-[#a0a0a0] text-center">Sum=$11,391,268.54</div>
      <div className="flex w-[153px] items-center gap-[5px] border-l border-[#a0a0a0] pl-1">
        <ZoomButton label="Zoom out" />
        <div className="relative flex h-3 w-[107px] items-center">
          <span className="absolute top-0 left-1/2 h-3 w-px bg-[#777]" />
          <input
            type="range"
            aria-label="Zoom"
            value={zoom}
            onChange={(e) => setZoom(Number(e.target.value))}
            className="relative h-px w-full appearance-none bg-[#777] [&::-webkit-slider-thumb]:size-[9px] [&::-webkit-slider-thumb]:appearance-none [&::-webkit-slider-thumb]:rounded-full [&::-webkit-slider-thumb]:border [&::-webkit-slider-thumb]:border-[#2b3f55] [&::-webkit-slider-thumb]:bg-[#6d93b8]"
          />
        </div>
        <ZoomButton label="Zoom in" plus />
      </div>
      <div className="w-[43px] border-l border-[#a0a0a0] pl-[6px]">90%</div>
    </footer>
  )
}

const App = () => {
  return (
    <div className="flex h-screen flex-col overflow-hidden bg-[#f0f0f0] font-['Open_Sans','Noto_Sans',sans-serif] text-xs text-black">
      <TitleBar />
      <MenuBar />
      <StandardBar />
      <FormattingBar />
      <FormulaBar />
      <main className="flex min-h-0 flex-1 border-t border-[#666]">
        <Grid />
        <VerticalScroll />
      </main>
      <SheetBar />
      <StatusBar />
    </div>
  )
}

export default App
